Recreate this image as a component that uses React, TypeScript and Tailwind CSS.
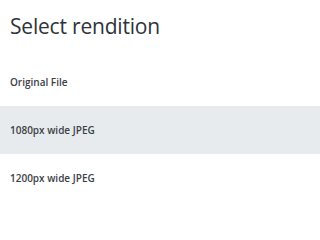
import React from 'react';

export default function App() {
  const renditions = ['Original File', '1080px wide JPEG', '1200px wide JPEG'];
  const selected = 1;

  return (
    <div className="w-full min-h-screen overflow-hidden bg-white font-['Open_Sans',sans-serif]">
      <h1 className="pl-[10px] pt-[12px] text-[21px] leading-[28px] tracking-[-0.2px] text-[#2e3338] font-normal">
        Select rendition
      </h1>
      <ul className="mt-[18px]">
        {renditions.map((r, i) => (
          <li
            key={i}
            className={`h-[48px] flex items-center pl-[10px] text-[10px] font-semibold text-[#3b4045] ${
              i === selected ? 'bg-[#e8ebed]' : ''
            }`}
          >
            {r}
          </li>
        ))}
      </ul>
    </div>
  );
}
